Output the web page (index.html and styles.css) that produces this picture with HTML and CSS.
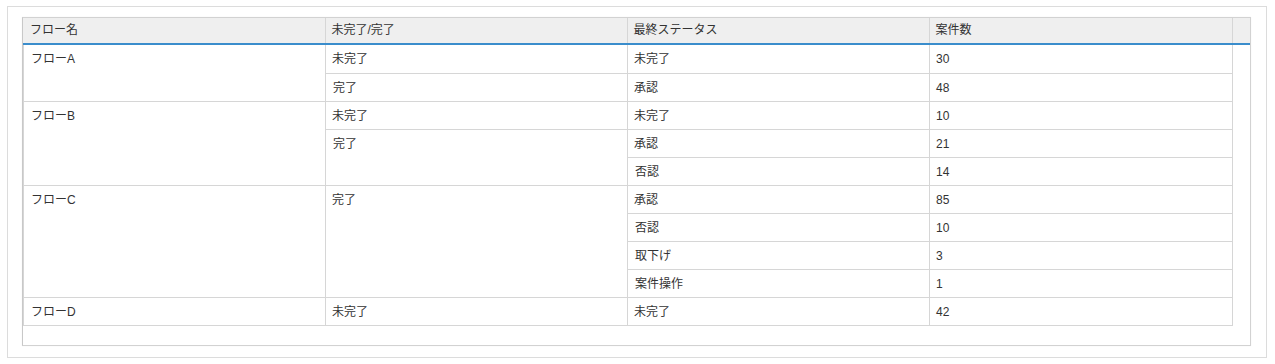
FILE: index.html
```html
<!DOCTYPE html>
<html lang="ja">
<head>
<meta charset="utf-8">
<link rel="stylesheet" href="styles.css">
</head>
<body>
<div class="panel">
  <div class="grid">
    <div class="grid-header">
      <table class="htable">
        <colgroup><col class="c1"><col class="c2"><col class="c3"><col class="c4"><col class="cg"></colgroup>
        <tr><th>フロー名</th><th>未完了/完了</th><th>最終ステータス</th><th>案件数</th><th class="gutter"></th></tr>
      </table>
    </div>
    <div class="grid-body">
      <table class="btable">
        <colgroup><col class="c1"><col class="c2"><col class="c3"><col class="c4"></colgroup>
        <tr><td rowspan="2">フローA</td><td>未完了</td><td>未完了</td><td>30</td></tr>
        <tr><td>完了</td><td>承認</td><td>48</td></tr>
        <tr><td rowspan="3">フローB</td><td>未完了</td><td>未完了</td><td>10</td></tr>
        <tr><td rowspan="2">完了</td><td>承認</td><td>21</td></tr>
        <tr><td>否認</td><td>14</td></tr>
        <tr><td rowspan="4">フローC</td><td rowspan="4">完了</td><td>承認</td><td>85</td></tr>
        <tr><td>否認</td><td>10</td></tr>
        <tr><td>取下げ</td><td>3</td></tr>
        <tr><td>案件操作</td><td>1</td></tr>
        <tr><td>フローD</td><td>未完了</td><td>未完了</td><td>42</td></tr>
      </table>
    </div>
  </div>
</div>
</body>
</html>
```

FILE: styles.css
```css
html, body {
  margin: 0;
  padding: 0;
  background: #ffffff;
}
body {
  font-family: "Liberation Sans", "Noto Sans CJK JP", sans-serif;
  font-size: 12px;
  color: #333333;
}
.panel {
  box-sizing: border-box;
  margin: 6px 0 0 7px;
  width: 1260px;
  height: 352px;
  border: 1px solid #dcdcdc;
  padding: 10px 15px 11px 14px;
}
.grid {
  box-sizing: border-box;
  width: 1229px;
  height: 329px;
  border: 1px solid #d2d2d2;
  border-left-color: #c8c8c8;
  box-shadow: 0 0 1px rgba(0,0,0,0.08);
}
.grid-header {
  background: #efefef;
  border-bottom: 2px solid #3a8dcc;
}
table {
  border-collapse: collapse;
  table-layout: fixed;
}
.htable {
  width: 1227px;
}
.btable {
  width: 1210px;
  border-right: 1px solid #d6d6d6;
}
col.c1 { width: 302px; }
col.c2 { width: 302px; }
col.c3 { width: 302px; }
col.c4 { width: 303px; }
col.cg { width: 18px; }
th {
  font-weight: normal;
  text-align: left;
  height: 25px;
  padding: 0 6px;
  border-left: 1px solid #d6d6d6;
  line-height: 25px;
  white-space: nowrap;
}
th:first-child { border-left: none; padding-left: 7px; }
td {
  box-sizing: border-box;
  height: 28px;
  padding: 7px 7px 0 6px;
  vertical-align: top;
  line-height: 14px;
  border-left: 1px solid #d6d6d6;
  border-bottom: 1px solid #d6d6d6;
  white-space: nowrap;
}
tr td:first-child { padding-left: 7px; }
```
